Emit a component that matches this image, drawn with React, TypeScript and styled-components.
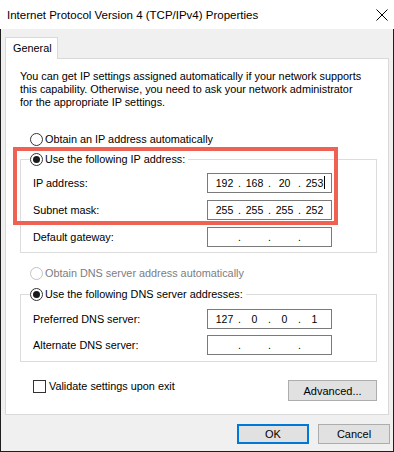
import styled, { createGlobalStyle } from 'styled-components';

interface IpField {
  label: string;
  octets: string[];
  caret?: boolean;
}

const GlobalStyle = createGlobalStyle`
  html, body {
    margin: 0;
    padding: 0;
    background: #ffffff;
  }

  body {
    font-family: "Liberation Sans", Arial, sans-serif;
    font-size: 10.85px;
    color: #000000;
  }
`;

const ipFields: IpField[] = [
  { label: 'IP address:', octets: ['192', '168', '20', '253'], caret: true },
  { label: 'Subnet mask:', octets: ['255', '255', '255', '252'] },
  { label: 'Default gateway:', octets: ['', '', '', ''] }
];

const dnsFields: IpField[] = [
  { label: 'Preferred DNS server:', octets: ['127', '0', '0', '1'] },
  { label: 'Alternate DNS server:', octets: ['', '', '', ''] }
];

const IpInput: React.FC<{ field: IpField }> = ({ field }) => (
  <FieldRow>
    <FieldLabel>{field.label}</FieldLabel>
    <IpBox>
      {field.octets.map((octet, i) => (
        <OctetGroup key={i}>
          {i > 0 && <Dot>.</Dot>}
          <Octet>
            <OctetText>
              {octet}
              {field.caret && i === 3 && <Caret />}
            </OctetText>
          </Octet>
        </OctetGroup>
      ))}
    </IpBox>
  </FieldRow>
);

const App: React.FC = () => {
  return (
    <>
      <GlobalStyle />
      <Window>
        <TitleBar>
          <Title>Internet Protocol Version 4 (TCP/IPv4) Properties</Title>
          <CloseIcon width="12" height="12" viewBox="0 0 12 12" aria-label="Close">
            <path d="M0.5 0.5 L11.5 11.5 M11.5 0.5 L0.5 11.5" stroke="#000" strokeWidth="1" />
          </CloseIcon>
        </TitleBar>

        <Body>
          <TabStrip>
            <Tab>General</Tab>
          </TabStrip>

          <Panel>
            <Intro>
              You can get IP settings assigned automatically if your network supports
              <br />
              this capability. Otherwise, you need to ask your network administrator
              <br />
              for the appropriate IP settings.
            </Intro>

            <RadioRow $mt={22}>
              <RadioMark />
              <span>Obtain an IP address automatically</span>
            </RadioRow>

            <GroupBox $mt={12} $padBottom={5}>
              <Legend>
                <RadioMark $checked />
                <span>Use the following IP address:</span>
              </Legend>
              <Fields $top={6} $gap={7}>
                {ipFields.map((field) => (
                  <IpInput key={field.label} field={field} />
                ))}
              </Fields>
            </GroupBox>

            <RadioRow $mt={12} $disabled>
              <RadioMark $disabled />
              <span>Obtain DNS server address automatically</span>
            </RadioRow>

            <GroupBox $mt={13} $padBottom={6}>
              <Legend>
                <RadioMark $checked />
                <span>Use the following DNS server addresses:</span>
              </Legend>
              <Fields $top={7} $gap={6}>
                {dnsFields.map((field) => (
                  <IpInput key={field.label} field={field} />
                ))}
              </Fields>
            </GroupBox>

            <BottomRow>
              <CheckRow>
                <CheckMark />
                <span>Validate settings upon exit</span>
              </CheckRow>
              <PushButton type="button" $width={89} $height={21}>
                Advanced...
              </PushButton>
            </BottomRow>

            {/* annotation drawn over the screenshot */}
            <Highlight />
          </Panel>

          <Footer>
            <PushButton type="button" $width={72} $height={20} $primary>
              OK
            </PushButton>
            <PushButton type="button" $width={72} $height={20}>
              Cancel
            </PushButton>
          </Footer>
        </Body>
      </Window>
    </>
  );
};

const Window = styled.div`
  width: 394px;
  height: 452px;
  display: flex;
  flex-direction: column;
  box-sizing: border-box;
`;

const TitleBar = styled.div`
  height: 29px;
  flex-shrink: 0;
  background: #ffffff;
  display: flex;
  align-items: center;
  justify-content: space-between;
  padding: 0 6px 0 7px;
`;

const Title = styled.span`
  font-size: 11.5px;
  color: #000000;
`;

const CloseIcon = styled.svg`
  display: block;
`;

const Body = styled.div`
  flex: 1;
  background: #f0f0f0;
  border: 1px solid #1e1e1e;
  border-top: none;
  padding: 8px 4px 0 4px;
  display: flex;
  flex-direction: column;
`;

const TabStrip = styled.div`
  display: flex;
  height: 21px;
`;

const Tab = styled.div`
  position: relative;
  z-index: 1;
  width: 53px;
  height: 22px;
  box-sizing: border-box;
  background: #ffffff;
  border: 1px solid #d9d9d9;
  border-bottom: none;
  padding-left: 7px;
  line-height: 20px;
`;

const Panel = styled.div`
  position: relative;
  height: 357px;
  box-sizing: border-box;
  background: #ffffff;
  border: 1px solid #d9d9d9;
  padding: 11px 11px 0 14px;
  display: flex;
  flex-direction: column;
`;

const Intro = styled.p`
  margin: 0;
  line-height: 13px;
  white-space: nowrap;
`;

const RadioRow = styled.div<{ $mt?: number; $disabled?: boolean }>`
  display: flex;
  align-items: center;
  gap: 2px;
  height: 16px;
  margin-top: ${(p) => p.$mt ?? 0}px;
  padding-left: 10px;
  color: ${(p) => (p.$disabled ? '#7d7d7d' : '#000000')};
`;

const RadioMark = styled.span<{ $checked?: boolean; $disabled?: boolean }>`
  width: 13px;
  height: 13px;
  box-sizing: border-box;
  border-radius: 50%;
  border: 1px solid ${(p) => (p.$disabled ? '#c2c2c2' : '#333333')};
  background: #ffffff;
  display: flex;
  align-items: center;
  justify-content: center;

  &::after {
    content: '';
    display: ${(p) => (p.$checked ? 'block' : 'none')};
    width: 7px;
    height: 7px;
    border-radius: 50%;
    background: #1a1a1a;
  }
`;

const GroupBox = styled.div<{ $mt: number; $padBottom: number }>`
  margin-top: ${(p) => p.$mt}px;
  border: 1px solid #dcdcdc;
  padding: 0 44px ${(p) => p.$padBottom}px 12px;
  display: flex;
  flex-direction: column;
`;

const Legend = styled.div`
  align-self: flex-start;
  display: flex;
  align-items: center;
  gap: 2px;
  height: 16px;
  margin: -9px 0 0 -3px;
  padding-right: 3px;
  background: #ffffff;
`;

const Fields = styled.div<{ $top: number; $gap: number }>`
  display: flex;
  flex-direction: column;
  margin-top: ${(p) => p.$top}px;
  gap: ${(p) => p.$gap}px;
`;

const FieldRow = styled.div`
  display: flex;
  align-items: center;
  justify-content: space-between;
  height: 20px;
`;

const FieldLabel = styled.span`
  white-space: nowrap;
`;

const IpBox = styled.div`
  width: 125px;
  height: 20px;
  box-sizing: border-box;
  border: 1px solid #7a7a7a;
  background: #ffffff;
  display: flex;
  align-items: center;
  padding-left: 3px;
  font-size: 10.5px;
`;

const OctetGroup = styled.span`
  display: flex;
  align-items: center;
`;

const Octet = styled.span`
  width: 27px;
  text-align: center;
`;

const OctetText = styled.span`
  position: relative;
`;

const Caret = styled.span`
  position: absolute;
  right: -2px;
  top: -1px;
  width: 1px;
  height: 13px;
  background: #000000;
`;

const Dot = styled.span`
  width: 3px;
  text-align: center;
`;

const BottomRow = styled.div`
  display: flex;
  justify-content: space-between;
  align-items: flex-start;
  margin-top: 18px;
`;

const CheckRow = styled.div`
  display: flex;
  align-items: center;
  gap: 3px;
  height: 16px;
  margin-top: -2px;
  padding-left: 13px;
`;

const CheckMark = styled.span`
  width: 13px;
  height: 13px;
  box-sizing: border-box;
  border: 1px solid #333333;
  background: #ffffff;
`;

const PushButton = styled.button<{ $width: number; $height: number; $primary?: boolean }>`
  width: ${(p) => p.$width}px;
  height: ${(p) => p.$height}px;
  box-sizing: border-box;
  padding: 0;
  background: #e1e1e1;
  border: ${(p) => (p.$primary ? '2px solid #0078d7' : '1px solid #adadad')};
  font-family: inherit;
  font-size: 11px;
  color: #000000;
`;

const Footer = styled.div`
  display: flex;
  justify-content: flex-end;
  gap: 9px;
  margin: 9px -1px 0 0;
`;

const Highlight = styled.div`
  position: absolute;
  left: 7px;
  top: 88px;
  width: 325px;
  height: 78px;
  box-sizing: border-box;
  border: 4px solid #ef6153;
  pointer-events: none;
`;

export default App;
